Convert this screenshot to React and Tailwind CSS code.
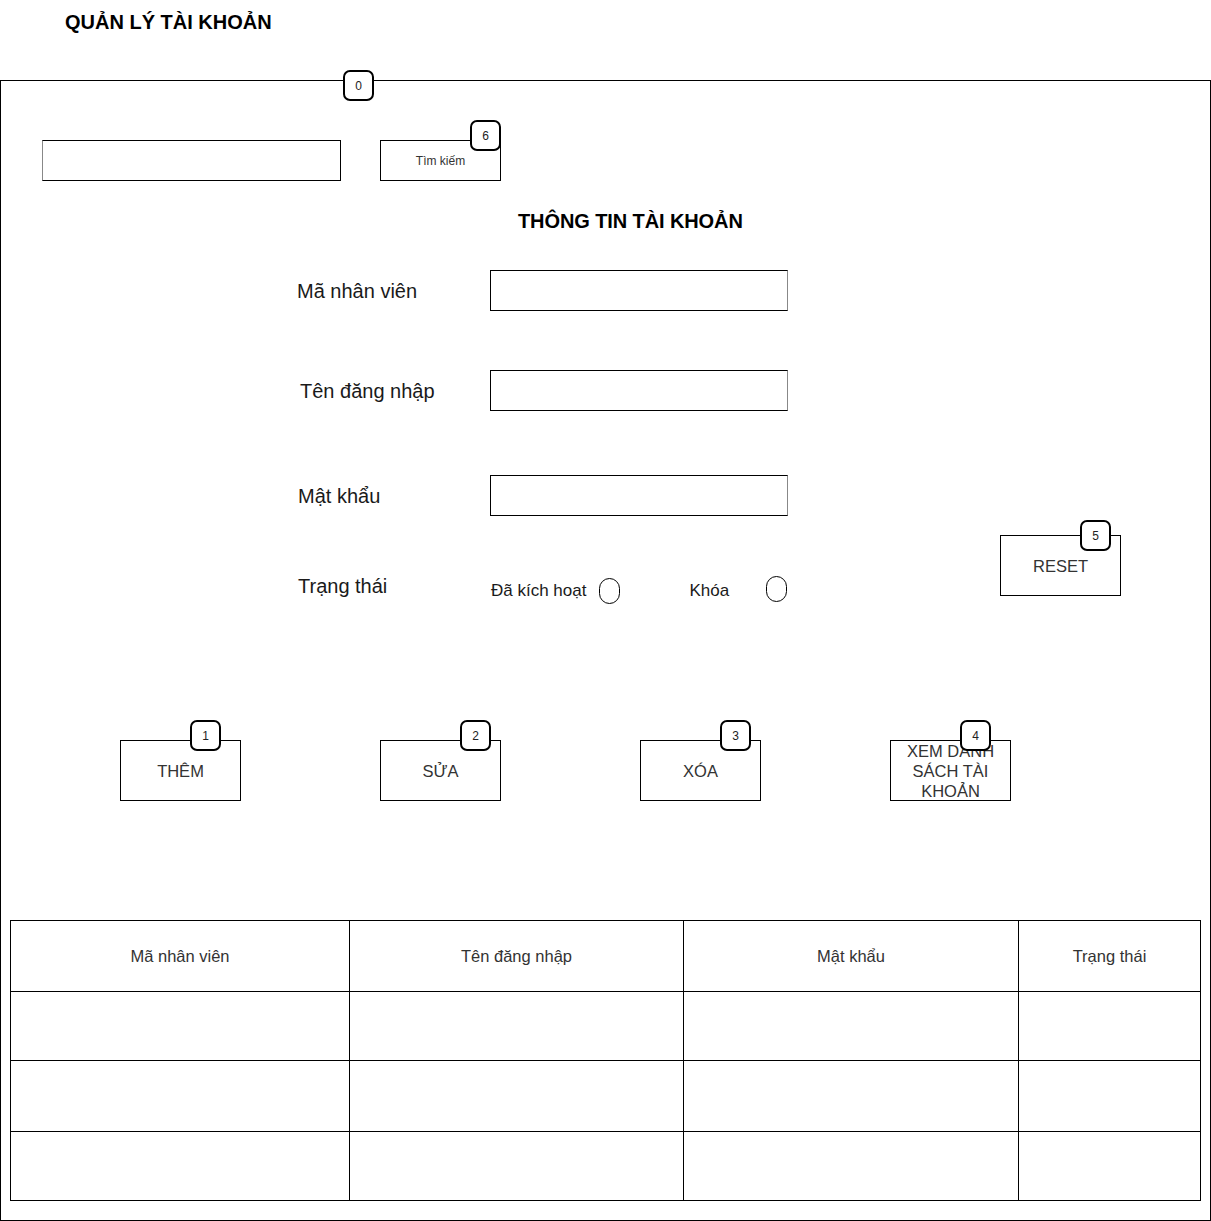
import React from 'react';

function Badge({ n, className }) {
    return (
        <div className={`absolute z-10 w-[31px] h-[31px] rounded-[7px] border-2 border-black bg-white flex items-center justify-center text-[12px] leading-none text-[#222] ${className}`}>
            {n}
        </div>
    );
}

function Field({ label, className = '', labelClass = '' }) {
    return (
        <div className={`flex items-center h-[41px] ${className}`}>
            <div className={`w-[193px] text-[20px] text-[#1a1a1a] ${labelClass}`}>{label}</div>
            <div className="w-[298px] h-[41px] border border-black border-r-[#888] bg-white"></div>
        </div>
    );
}

function ActionButton({ children, badge, badgeClass, className = '' }) {
    return (
        <div className={`relative w-[121px] h-[61px] border border-black flex items-center justify-center text-center text-[16.5px] leading-[20px] text-[#333] ${className}`}>
            {children}
            <Badge n={badge} className={badgeClass} />
        </div>
    );
}

const columns = ['Mã nhân viên', 'Tên đăng nhập', 'Mật khẩu', 'Trạng thái'];
const rowHeights = ['h-[69px]', 'h-[71px]', 'h-[69px]'];

export default function App() {
    return (
        <div className="w-[1211px] h-[1221px] bg-white font-['Liberation_Sans',Arial,sans-serif] text-black overflow-hidden">
            {/* Page title */}
            <div className="h-[80px] pt-[10px] pl-[65px]">
                <h1 className="text-[20px] leading-[24px] font-bold">QUẢN LÝ TÀI KHOẢN</h1>
            </div>

            {/* Main frame */}
            <div className="relative w-[1211px] h-[1141px] border border-black flex flex-col">
                <Badge n="0" className="left-[342px] top-[-11px]" />

                {/* Search */}
                <div className="flex mt-[59px] ml-[41px]">
                    <div className="w-[299px] h-[41px] border border-black border-l-[#888]"></div>
                    <div className="relative ml-[39px] w-[121px] h-[41px] border border-black flex items-center justify-center text-[12px] text-[#333]">
                        Tìm kiếm
                        <Badge n="6" className="left-[89px] top-[-21px]" />
                    </div>
                </div>

                <h2 className="mt-[28px] ml-[517px] text-[20px] leading-[24px] font-bold tracking-[-0.1px]">THÔNG TIN TÀI KHOẢN</h2>

                {/* Form */}
                <div className="flex mt-[37px]">
                    <div className="ml-[296px] flex flex-col">
                        <Field label="Mã nhân viên" />
                        <Field label="Tên đăng nhập" className="mt-[59px]" labelClass="pl-[3px]" />
                        <Field label="Mật khẩu" className="mt-[64px]" labelClass="pl-[1px]" />
                        <div className="flex items-center h-[30px] mt-[60px]">
                            <div className="w-[194px] pl-[1px] text-[20px] text-[#1a1a1a] -mt-[10px]">Trạng thái</div>
                            <span className="text-[17px] text-[#1a1a1a]">Đã kích hoạt</span>
                            <span className="ml-[13px] w-[21px] h-[26px] rounded-full border border-black"></span>
                            <span className="ml-[69px] text-[17px] text-[#1a1a1a]">Khóa</span>
                            <span className="ml-[37px] mb-[4px] w-[21px] h-[26px] rounded-full border border-black"></span>
                        </div>
                    </div>
                    <div className="ml-[212px] mt-[265px]">
                        <ActionButton badge="5" badgeClass="left-[79px] top-[-16px]">RESET</ActionButton>
                    </div>
                </div>

                {/* Actions */}
                <div className="flex mt-[134px]">
                    <ActionButton badge="1" badgeClass="left-[69px] top-[-21px]" className="ml-[119px]">THÊM</ActionButton>
                    <ActionButton badge="2" badgeClass="left-[79px] top-[-21px]" className="ml-[139px]">SỬA</ActionButton>
                    <ActionButton badge="3" badgeClass="left-[79px] top-[-21px]" className="ml-[139px]">XÓA</ActionButton>
                    <ActionButton badge="4" badgeClass="left-[69px] top-[-21px]" className="ml-[129px] px-[2px]">XEM DANH SÁCH TÀI KHOẢN</ActionButton>
                </div>

                {/* Table */}
                <div className="mt-[119px] ml-[9px] w-[1191px] border-t border-l border-black grid grid-cols-[339px_334px_335px_182px]">
                    {columns.map((c) => (
                        <div key={c} className="h-[71px] border-r border-b border-black flex items-center justify-center text-[16.5px] text-[#333]">
                            {c}
                        </div>
                    ))}
                    {rowHeights.map((h, i) =>
                        columns.map((c) => (
                            <div key={`${i}-${c}`} className={`${h} border-r border-b border-black`}></div>
                        ))
                    )}
                </div>
            </div>
        </div>
    );
}
